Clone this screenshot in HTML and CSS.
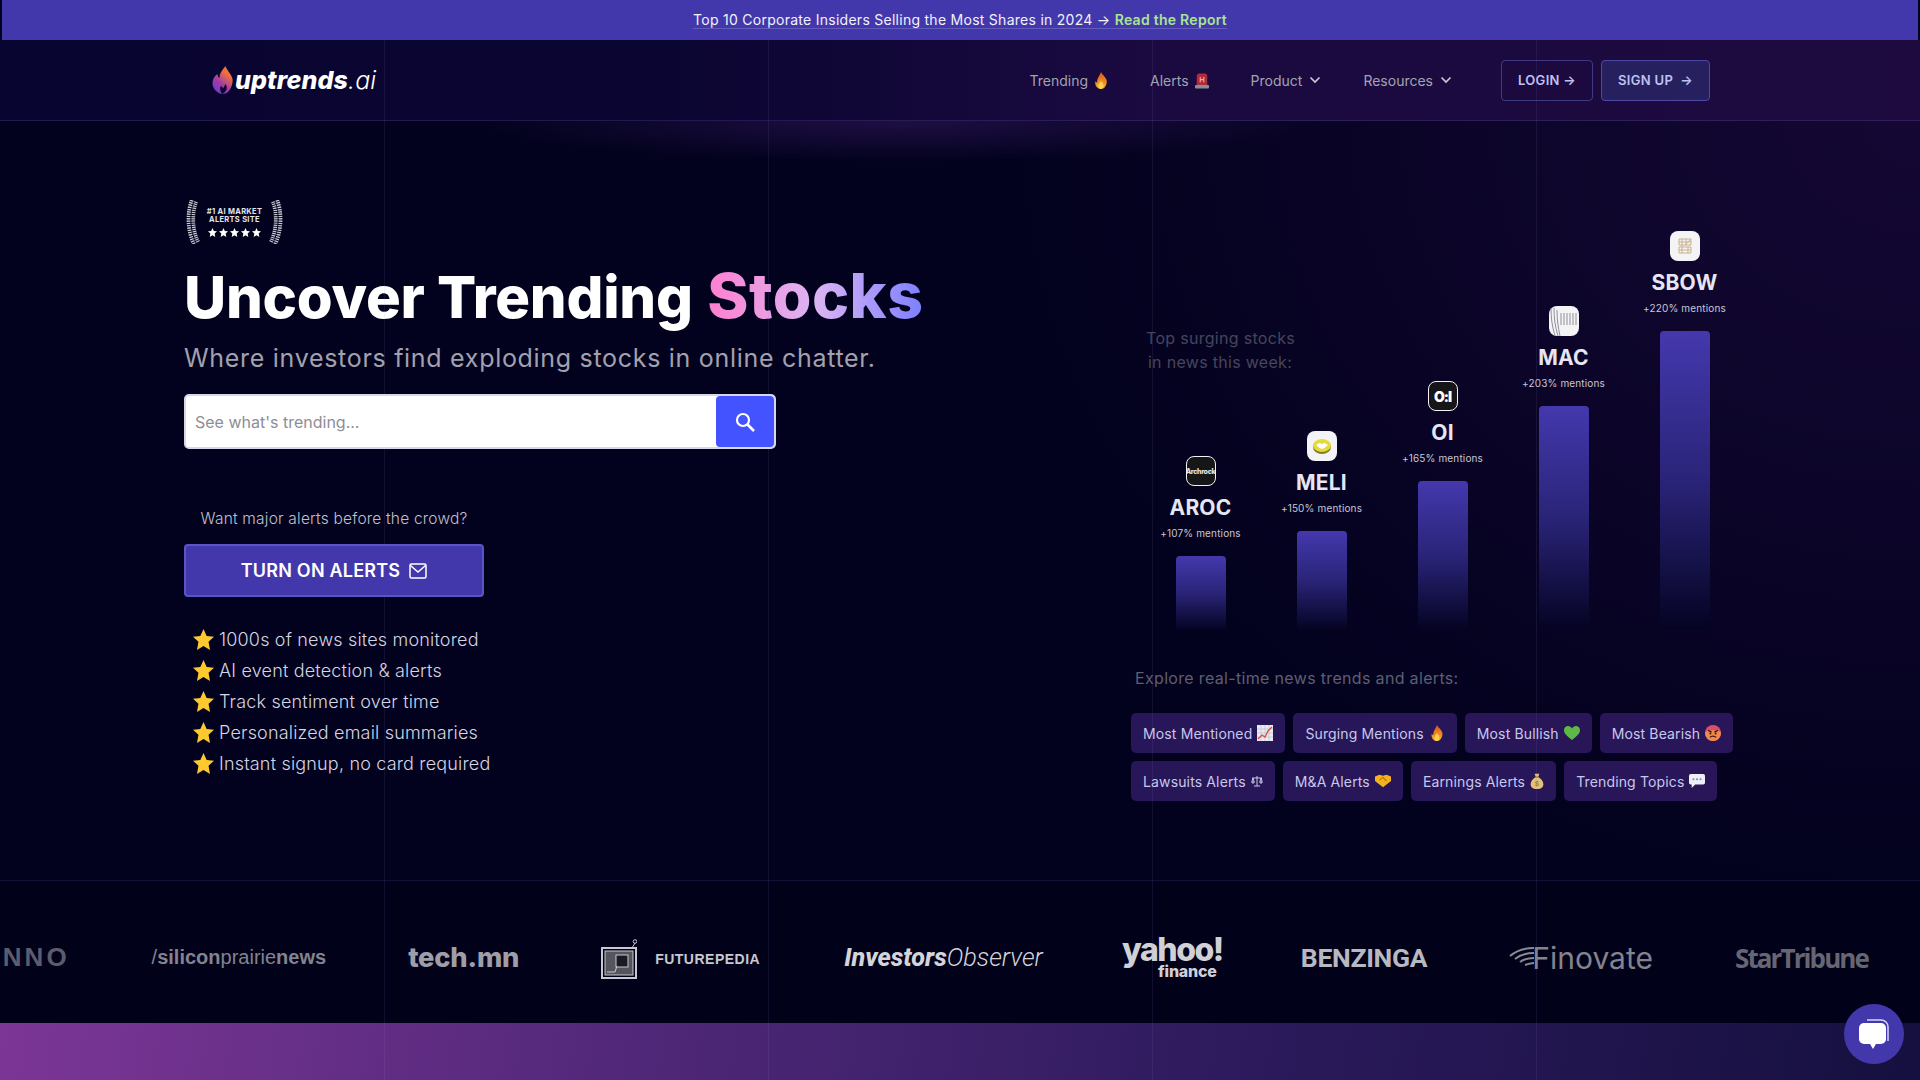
FILE: index.html
```html
<!DOCTYPE html>
<html lang="en">
<head>
<meta charset="utf-8">
<title>uptrends.ai</title>
<link rel="stylesheet" href="styles.css">
</head>
<body>
<svg class="sprite" xmlns="http://www.w3.org/2000/svg">
  <defs>
    <linearGradient id="flameG" x1="0" y1="1" x2="0" y2="0"><stop offset="0" stop-color="#f8b52a"/><stop offset="1" stop-color="#d9541c"/></linearGradient>
    <linearGradient id="logoG" x1="0" y1="1" x2="0.6" y2="0"><stop offset="0" stop-color="#5b3fd6"/><stop offset=".45" stop-color="#a03ba8"/><stop offset=".85" stop-color="#f0703c"/></linearGradient>
    <symbol id="i-flame" viewBox="0 0 16 20"><path d="M8 0c1 3 5 5 6.500 9 1.300 4.500-1.800 11-6.500 11S.2 15 1.500 10.500c.5 1.500 1.300 2 2 2C3 8 6 5 8 0z" fill="url(#flameG)"/><path d="M8 10c.5 2 3 3 3 6 0 2-1.500 4-3 4s-3-2-3-4c0-3 2.500-3.500 3-6z" fill="#fcd34d"/></symbol>
    <symbol id="i-siren" viewBox="0 0 16 18"><rect x="0" y="14" width="16" height="4" rx="1" fill="#8d8d96"/><path d="M2 14V4a3 3 0 0 1 3-3h6a3 3 0 0 1 3 3v10z" fill="#b02c38"/><path d="M6 5v6M10 5v6M6 8h4" stroke="#f5a0a0" stroke-width="1.300" fill="none"/></symbol>
    <symbol id="i-chart" viewBox="0 0 16 16"><rect width="16" height="16" fill="#eceaf0"/><path d="M0 4h16M0 8h16M0 12h16M4 0v16M8 0v16M12 0v16" stroke="#b9c3d6" stroke-width=".7"/><path d="M1 14l4-4 3 2 3-6 4-4" stroke="#d8503c" stroke-width="1.300" fill="none"/></symbol>
    <symbol id="i-heart" viewBox="0 0 18 16"><path d="M9 16C4 12 0 9 0 4.700 0 2 2 0 4.500 0 6.300 0 8 1 9 2.800 10 1 11.700 0 13.500 0 16 0 18 2 18 4.700 18 9 14 12 9 16z" fill="#5eb847"/></symbol>
    <symbol id="i-angry" viewBox="0 0 18 18"><circle cx="9" cy="9" r="9" fill="#d9506a"/><path d="M0 9a9 9 0 0 0 18 0c0-2-6-3-9-3s-9 1-9 3z" fill="#f08a4c"/><path d="M3.500 6l4 2M14.500 6l-4 2" stroke="#3d1a10" stroke-width="1.400"/><circle cx="6" cy="9.500" r="1.100" fill="#3d1a10"/><circle cx="12" cy="9.500" r="1.100" fill="#3d1a10"/><path d="M5.500 14c1.500-2 5.500-2 7 0" stroke="#3d1a10" stroke-width="1.200" fill="none"/></symbol>
    <symbol id="i-scales" viewBox="0 0 12 12"><path d="M6 1v10M3 11h6M1 3h10M2 3L.8 7M2 3l1.200 4M10 3L8.800 7M10 3l1.200 4M.8 7a1.200 1.200 0 0 0 2.400 0zM8.800 7a1.200 1.200 0 0 0 2.400 0z" stroke="#c9c6e6" stroke-width="1" fill="none"/></symbol>
    <symbol id="i-shake" viewBox="0 0 18 14"><path d="M0 2l5-2 4 1 4-1 5 2v5l-9 7-9-7z" fill="#f5b21e"/><path d="M5 6l4-3 4 4" stroke="#b5730a" stroke-width="1.200" fill="none"/></symbol>
    <symbol id="i-bag" viewBox="0 0 16 20"><path d="M5 1h6L9.500 5c4 2 6.500 6 6.500 9 0 4-3 6-8 6s-8-2-8-6c0-3 2.500-7 6.500-9z" fill="#e8be7a"/><path d="M5.500 5h5" stroke="#9a6a2c" stroke-width="1.300"/><text x="8" y="16" font-size="8" font-weight="700" text-anchor="middle" fill="#7a8f2c" font-family="Inter, sans-serif">$</text></symbol>
    <symbol id="i-speech" viewBox="0 0 18 16"><path d="M2 0h14a2 2 0 0 1 2 2v8a2 2 0 0 1-2 2H7l-4 4v-4H2a2 2 0 0 1-2-2V2a2 2 0 0 1 2-2z" fill="#eef0f5"/><circle cx="5" cy="6" r="1.200" fill="#6a8fd0"/><circle cx="9" cy="6" r="1.200" fill="#6a8fd0"/><circle cx="13" cy="6" r="1.200" fill="#6a8fd0"/></symbol>
    <symbol id="i-star" viewBox="0 0 20 20"><path d="M10 0l3 6.600 7 .8-5.200 4.700L16.200 20 10 16.300 3.800 20l1.400-7.900L0 7.400l7-.8z" fill="#fdc92f"/></symbol>
    <symbol id="i-chev" viewBox="0 0 12 8"><path d="M1.500 1.500L6 6l4.500-4.500" stroke="currentColor" stroke-width="1.700" fill="none"/></symbol>
    <symbol id="i-laurel" viewBox="0 0 14 44"><path d="M8 1C3.500 12 3.500 30 10 43" stroke="#c9c9d2" stroke-width="8.500" stroke-dasharray="1.300 .9" fill="none"/><path d="M8 1C3.500 12 3.500 30 10 43" stroke="#03021e" stroke-width="1" fill="none"/></symbol>
    <symbol id="i-mini" viewBox="0 0 10 10"><path d="M5 0l1.500 3.300 3.500.4-2.600 2.400.7 3.900L5 8.100 1.900 10l.7-3.900L0 3.700l3.500-.4z" fill="#fff"/></symbol>
  </defs>
</svg>

<div class="page">
  <div class="gridlines"><i></i><i></i><i></i><i></i></div>

  <a class="banner">
    <span class="banner-text">Top 10 Corporate Insiders Selling the Most Shares in 2024 → <b>Read the Report</b></span>
  </a>

  <header class="nav">
    <div class="logo">
      <svg class="logo-flame" viewBox="0 0 20 28"><path d="M13 0c1 4 6 8 7 13 1 7-4 15-9 15-6 0-11-5-11-11 0-4 2-7 5-9 0 2 1 4 2 4 0-5 3-8 6-12z" fill="url(#logoG)"/><path d="M10 28c-2-2-3-4-2-8l3 2 2-4c2 3 2 7-3 10z" fill="#0a0630"/></svg>
      <span class="logo-word">uptrends<em>.ai</em></span>
    </div>
    <nav class="menu">
      <span class="menu-item">Trending <svg class="m-emoji"><use href="#i-flame"/></svg></span>
      <span class="menu-item">Alerts <svg class="m-emoji"><use href="#i-siren"/></svg></span>
      <span class="menu-item">Product <svg class="chev"><use href="#i-chev"/></svg></span>
      <span class="menu-item">Resources <svg class="chev"><use href="#i-chev"/></svg></span>
    </nav>
    <div class="auth">
      <span class="btn-login">LOGIN →</span>
      <span class="btn-signup">SIGN UP &nbsp;→</span>
    </div>
  </header>

  <main class="hero">
    <section class="left">
      <div class="badge">
        <svg class="laurel"><use href="#i-laurel"/></svg>
        <div class="badge-mid">
          <div class="badge-text">#1 AI MARKET<br>ALERTS SITE</div>
          <div class="badge-stars">
            <svg><use href="#i-mini"/></svg><svg><use href="#i-mini"/></svg><svg><use href="#i-mini"/></svg><svg><use href="#i-mini"/></svg><svg><use href="#i-mini"/></svg>
          </div>
        </div>
        <svg class="laurel flip"><use href="#i-laurel"/></svg>
      </div>
      <h1 class="title">Uncover Trending <span class="grad">Stocks</span></h1>
      <p class="subtitle">Where investors find exploding stocks in online chatter.</p>
      <div class="search">
        <span class="placeholder">See what's trending...</span>
        <span class="search-btn">
          <svg viewBox="0 0 24 24" width="24" height="24"><circle cx="10" cy="10" r="6" stroke="#fff" stroke-width="2.200" fill="none"/><path d="M14.500 14.500L21 21" stroke="#fff" stroke-width="2.600"/></svg>
        </span>
      </div>
      <div class="cta-wrap">
        <p class="cta-note">Want major alerts before the crowd?</p>
        <span class="cta">TURN ON ALERTS
          <svg viewBox="0 0 18 16" width="18" height="16"><rect x="1" y="1" width="16" height="14" rx="1.500" stroke="#fff" stroke-width="1.500" fill="none"/><path d="M1.500 2.500L9 9l7.500-6.500" stroke="#fff" stroke-width="1.500" fill="none"/></svg>
        </span>
      </div>
      <ul class="perks">
        <li><svg class="star"><use href="#i-star"/></svg>1000s of news sites monitored</li>
        <li><svg class="star"><use href="#i-star"/></svg>AI event detection &amp; alerts</li>
        <li><svg class="star"><use href="#i-star"/></svg>Track sentiment over time</li>
        <li><svg class="star"><use href="#i-star"/></svg>Personalized email summaries</li>
        <li><svg class="star"><use href="#i-star"/></svg>Instant signup, no card required</li>
      </ul>
    </section>

    <section class="right">
      <div class="chart">
        <p class="chart-note">Top surging stocks<br>in news this week:</p>
        <div class="col">
          <span class="co co-dark"><span class="co-arch">Archrock</span></span>
          <span class="tick">AROC</span><span class="pct">+107% mentions</span>
          <span class="bar" style="height:74px"></span>
        </div>
        <div class="col">
          <span class="co"><svg viewBox="0 0 30 30" width="30" height="30"><ellipse cx="15" cy="16" rx="9" ry="7" fill="#7d7a28"/><ellipse cx="15" cy="14.500" rx="9" ry="6.500" fill="#e6db36"/><path d="M9 14l3.500-2 2.500 1 2.500-1 3.500 2-3.500 3-2.500 1-2.500-1z" fill="#fff"/></svg></span>
          <span class="tick">MELI</span><span class="pct">+150% mentions</span>
          <span class="bar" style="height:99px"></span>
        </div>
        <div class="col">
          <span class="co co-dark"><span class="co-oi">O:I</span></span>
          <span class="tick">OI</span><span class="pct">+165% mentions</span>
          <span class="bar" style="height:149px"></span>
        </div>
        <div class="col">
          <span class="co"><svg viewBox="0 0 30 30" width="30" height="30"><g stroke="#8f8f98" stroke-width="1" fill="none"><path d="M2 2c0 10 1 18 4 28M5 2c0 10 1 18 4 28M8 4c0 9 1 17 3 26"/><path d="M12 7v12M15 7v12M18 7v12M21 7v12M24 7v12M27 7v12"/></g></svg></span>
          <span class="tick">MAC</span><span class="pct">+203% mentions</span>
          <span class="bar" style="height:224px"></span>
        </div>
        <div class="col">
          <span class="co"><svg viewBox="0 0 30 30" width="30" height="30"><path d="M9 8h12v6H9zM9 16h12v6H9zM12 8v14M16 8v6M18 16v6M9 11h12M9 19h12M21 8l-6 6" stroke="#c8b18a" stroke-width="1" fill="none"/></svg></span>
          <span class="tick">SBOW</span><span class="pct">+220% mentions</span>
          <span class="bar" style="height:299px"></span>
        </div>
      </div>
      <p class="explore">Explore real-time news trends and alerts:</p>
      <div class="pills">
        <span class="pill">Most Mentioned <svg><use href="#i-chart"/></svg></span>
        <span class="pill">Surging Mentions <svg><use href="#i-flame"/></svg></span>
        <span class="pill">Most Bullish <svg><use href="#i-heart"/></svg></span>
        <span class="pill">Most Bearish <svg><use href="#i-angry"/></svg></span>
        <span class="pill">Lawsuits Alerts <svg class="pill-sm"><use href="#i-scales"/></svg></span>
        <span class="pill">M&amp;A Alerts <svg><use href="#i-shake"/></svg></span>
        <span class="pill">Earnings Alerts <svg class="pill-md"><use href="#i-bag"/></svg></span>
        <span class="pill">Trending Topics <svg><use href="#i-speech"/></svg></span>
      </div>
    </section>
  </main>

  <section class="press">
    <span class="pl pl-nno">NNO</span>
    <span class="pl pl-sil">/<b>silicon</b>prairie<b>news</b></span>
    <span class="pl pl-tech">tech.mn</span>
    <span class="pl pl-fut">
      <svg viewBox="0 0 36 40" width="36" height="40"><rect x="1" y="9" width="34" height="30" fill="none" stroke="#c8c8ce" stroke-width="2"/><rect x="4" y="12" width="28" height="24" fill="#55555e" stroke="#c8c8ce"/><rect x="15" y="16" width="12" height="12" fill="#1a1a26" stroke="#c8c8ce"/><path d="M6 33h8l2-6M31 9l3-5" stroke="#c8c8ce" fill="none"/><circle cx="34" cy="2.500" r="1.800" fill="none" stroke="#c8c8ce"/></svg>
      <span>FUTUREPEDIA</span>
    </span>
    <span class="pl pl-inv"><b>Investors</b>Observer</span>
    <span class="pl pl-yah">yahoo!<small>finance</small></span>
    <span class="pl pl-ben">BENZINGA</span>
    <span class="pl pl-fin">
      <svg viewBox="0 0 26 22" width="26" height="22"><path d="M1 9C8 3 16 1 25 1M6 12c5-4 12-6 19-6M11 15c4-3 9-4 14-4M16 18c3-1 6-2 9-2" stroke="#8b8b96" stroke-width="2" fill="none"/></svg>
      <span>Finovate</span>
    </span>
    <span class="pl pl-star">StarTribune</span>
  </section>

  <div class="strip"></div>

  <div class="chat">
    <svg viewBox="0 0 32 30" width="32" height="30"><path d="M9 1h14a7 7 0 0 1 7 7v14" stroke="#d9d6f5" stroke-width="1.500" fill="none"/><path d="M6 4h17a5 5 0 0 1 5 5v11a5 5 0 0 1-5 5h-5l-3 5-3-5H6a5 5 0 0 1-5-5V9a5 5 0 0 1 5-5z" fill="#fff"/></svg>
  </div>
</div>
</body>
</html>
```

FILE: styles.css
```css
* { box-sizing: border-box; }
html, body { margin: 0; padding: 0; background: #03021e; }
body { font-family: Inter, "Liberation Sans", sans-serif; color: #fff; }
p, h1, ul { margin: 0; padding: 0; }
.sprite { position: absolute; width: 0; height: 0; }

.page {
  position: relative;
  width: 1920px;
  height: 1080px;
  overflow: hidden;
  display: flex;
  flex-direction: column;
  background: #03021e;
}

.gridlines {
  position: absolute;
  inset: 40px 0 0 0;
  display: grid;
  grid-template-columns: repeat(5, 1fr);
  pointer-events: none;
  z-index: 3;
}
.gridlines i { margin-right: -1px; border-right: 1px solid rgba(150, 140, 210, .11); }

.banner {
  height: 40px;
  margin: 0 2px;
  flex: none;
  display: flex;
  align-items: center;
  justify-content: center;
  padding-bottom: 1px;
  background: #4338ab;
  font-size: 14px;
  color: #f2f2fa;
  position: relative;
  z-index: 4;
}
.banner-text { text-decoration: underline; text-decoration-color: rgba(255,255,255,.18); text-underline-offset: 3px; letter-spacing: .27px; }
.banner b { color: #a7e58f; font-weight: 600; }

.nav {
  height: 81px;
  flex: none;
  display: flex;
  align-items: center;
  padding: 0 210px 0 212px;
  border-bottom: 1px solid rgba(130, 110, 200, .2);
  background: linear-gradient(90deg, #080530 0, #0b0531 35%, #1a0a40 60%, #1e0a3e 100%);
}
.logo { display: flex; align-items: center; gap: 2px; width: 200px; }
.logo-flame { width: 21px; height: 28px; flex: none; }
.logo-word { font-size: 25px; font-weight: 800; font-style: italic; letter-spacing: .1px; }
.logo-word em { font-weight: 300; }

.menu { display: flex; align-items: center; gap: 42px; margin-left: auto; }
.menu-item { display: flex; align-items: center; gap: 6px; font-size: 14px; color: #a3a2b0; }
.m-emoji { width: 14px; height: 17px; }
.chev { width: 12px; height: 8px; margin-left: 1px; color: #c9c8d4; }

.auth { display: flex; gap: 8px; margin-left: 49px; }
.btn-login, .btn-signup {
  display: flex;
  align-items: center;
  justify-content: center;
  height: 41px;
  border-radius: 4px;
  font-size: 13px;
  font-weight: 600;
  letter-spacing: .3px;
  color: #bfc1f2;
}
.btn-login { width: 92px; border: 1px solid #3e3a86; }
.btn-signup { width: 109px; border: 1px solid #4a4aa5; background: #26215e; }

.hero {
  height: 759px;
  flex: none;
  display: grid;
  grid-template-columns: 1131px 1fr;
  background:
    radial-gradient(ellipse 420px 40px at 900px 0, rgba(75, 35, 130, .38), transparent),
    radial-gradient(ellipse 900px 760px at 100% 0, rgba(35, 12, 70, .55), transparent),
    #03021e;
}
.left { padding: 79px 0 0 184px; }
.right { padding: 110px 0 0 0; }

.badge { display: flex; align-items: center; width: 97px; height: 44px; margin-left: 2px; }
.laurel { width: 14px; height: 44px; flex: none; }
.flip { transform: scaleX(-1); }
.badge-mid { flex: 1; display: flex; flex-direction: column; align-items: center; }
.badge-text { font-size: 7.500px; font-weight: 700; line-height: 8px; text-align: center; letter-spacing: .3px; color: #e4e4ec; }
.badge-stars { display: flex; gap: 2px; margin-top: 4px; }
.badge-stars svg { width: 9px; height: 9px; }

.title { margin-top: 18px; font-size: 58px; line-height: 70px; font-weight: 800; color: #fff; letter-spacing: -.25px; white-space: nowrap; }
.grad {
  margin-left: 2px;
  font-weight: 800;
  font-size: 62.500px;
  line-height: 1;
  letter-spacing: .5px;
  background: linear-gradient(90deg, #ff7fd0, #dcb4f2 50%, #7d80ff);
  -webkit-background-clip: text;
  background-clip: text;
  color: transparent;
}
.subtitle { margin-top: 8px; font-size: 25px; line-height: 36px; color: #a2a1af; letter-spacing: .7px; white-space: nowrap; }

.search {
  margin-top: 18px;
  width: 592px;
  height: 55px;
  background: #fff;
  border: 2px solid #d6d6ec;
  border-radius: 5px;
  display: flex;
  align-items: center;
  justify-content: space-between;
  position: relative;
  z-index: 5;
}
.placeholder { margin-left: 9px; font-size: 16px; color: #8e8e96; }
.search-btn { width: 58px; height: 51px; background: #4353ff; border-radius: 4px; display: flex; align-items: center; justify-content: center; }

.cta-wrap { width: 300px; margin-top: 58px; }
.cta-note { font-size: 15.500px; font-weight: 300; line-height: 24px; text-align: center; color: #c0c0cc; letter-spacing: .2px; }
.cta {
  margin-top: 13px;
  height: 53px;
  display: flex;
  align-items: center;
  justify-content: center;
  gap: 9px;
  background: #4338ab;
  border: 2px solid #5a55c4;
  border-radius: 4px;
  font-size: 18px;
  font-weight: 600;
  letter-spacing: .2px;
  position: relative;
  z-index: 5;
}

.perks { margin-top: 27px; list-style: none; }
.perks li { display: flex; align-items: center; height: 31px; padding-left: 9px; font-size: 18px; font-weight: 300; letter-spacing: .18px; color: #d5d5e2; }
.star { width: 21px; height: 21px; margin-right: 5px; flex: none; }

.chart { position: relative; display: flex; align-items: flex-end; height: 399px; padding-left: 9px; }
.chart-note { position: absolute; left: 15px; top: 95px; width: 148px; text-align: center; font-size: 16px; line-height: 24px; letter-spacing: .3px; color: #46455c; white-space: nowrap; }
.col { width: 121px; display: flex; flex-direction: column; align-items: center; }
.co { width: 30px; height: 30px; border-radius: 8px; background: #f4f4f7; display: flex; align-items: center; justify-content: center; overflow: hidden; flex: none; }
.co-dark { background: #161618; border: 1px solid #f2f2f4; }
.co-arch { font-size: 7px; font-weight: 800; color: #e6e6e6; letter-spacing: -.3px; }
.co-oi { font-size: 14px; font-weight: 900; color: #fff; letter-spacing: -1px; }
.tick { margin-top: 9px; font-size: 21px; line-height: 26px; font-weight: 700; color: #e6e5f2; letter-spacing: .2px; }
.pct { margin-top: 5px; font-size: 10px; line-height: 14px; color: #c8c7d6; letter-spacing: .15px; }
.bar { width: 50px; margin-top: 16px; border-radius: 4px 4px 0 0; background: linear-gradient(180deg, #4438ad 0, #2a2478 50%, #040322 100%); }

.explore { margin-top: 36px; margin-left: 4px; font-size: 16px; line-height: 24px; letter-spacing: .33px; color: #5f5e72; }
.pills { margin-top: 23px; width: 610px; display: flex; flex-wrap: wrap; gap: 8px; }
.pill {
  height: 40px;
  display: flex;
  align-items: center;
  gap: 5px;
  padding: 0 12px;
  border-radius: 5px;
  background: rgba(52, 30, 108, .75);
  font-size: 14px;
  letter-spacing: .14px;
  color: #c8c8ec;
}
.pill svg { width: 16px; height: 16px; flex: none; }
.pill .pill-sm { width: 12px; height: 12px; }
.pill .pill-md { width: 14px; }

.press {
  height: 143px;
  flex: none;
  display: flex;
  align-items: center;
  justify-content: flex-end;
  gap: 82px;
  padding: 14px 52px 0 0;
  border-top: 1px solid rgba(110, 90, 180, .18);
  background: #02011a;
  overflow: hidden;
  white-space: nowrap;
}
.pl { flex: none; display: flex; align-items: center; color: #c8c8ce; }
.pl-nno { font-size: 26px; font-weight: 700; letter-spacing: 3px; color: #5c5c6c; font-family: "Liberation Sans", sans-serif; margin-top: -3px; }
.pl-sil { font-family: "Liberation Sans", sans-serif; font-size: 20px; font-weight: 300; color: #83838f; margin-top: -3px; display: block; }
.pl-sil b { font-weight: 700; }
.pl-tech { font-size: 27.300px; font-weight: 800; letter-spacing: -.2px; color: #9e9ea8; margin-top: -3px; }
.pl-fut { gap: 18px; color: #c8c8ce; font-family: "Liberation Sans", sans-serif; font-size: 14px; font-weight: 700; letter-spacing: .5px; }
.pl-inv { font-family: "Roboto", sans-serif; display: block; margin-left: 2px; font-size: 25.200px; font-style: italic; font-weight: 300; color: #d4d4da; margin-top: -3px; }
.pl-inv b { font-weight: 800; }
.pl-yah { flex-direction: column; align-items: flex-end; width: 98px; margin-right: -4px; font-size: 32px; line-height: 28px; font-weight: 800; letter-spacing: -1.500px; color: #d0d0d6; margin-top: -4px; }
.pl-yah small { font-size: 16px; line-height: 14px; font-weight: 800; letter-spacing: -.2px; margin-right: 6px; }
.pl-ben { font-family: "Roboto", sans-serif; font-size: 26.500px; font-weight: 700; letter-spacing: -.3px; color: #b8b8c0; margin-top: -3px; }
.pl-fin { color: #83838e; font-size: 30px; font-weight: 400; letter-spacing: 0; margin-top: -3px; gap: 0; }
.pl-fin svg { margin-right: -3px; }
.pl-star { font-family: "Open Sans", sans-serif; font-size: 26px; font-weight: 700; letter-spacing: -1.900px; color: #666672; margin-top: -3px; }

.strip {
  flex: 1;
  background: linear-gradient(100deg, #7c3696 0, #4e2777 35%, #2c1a5c 65%, #15103f 100%);
}

.chat {
  position: absolute;
  right: 16px;
  bottom: 16px;
  width: 60px;
  height: 60px;
  border-radius: 50%;
  background: #4338ab;
  display: flex;
  align-items: center;
  justify-content: center;
  z-index: 6;
}
```
